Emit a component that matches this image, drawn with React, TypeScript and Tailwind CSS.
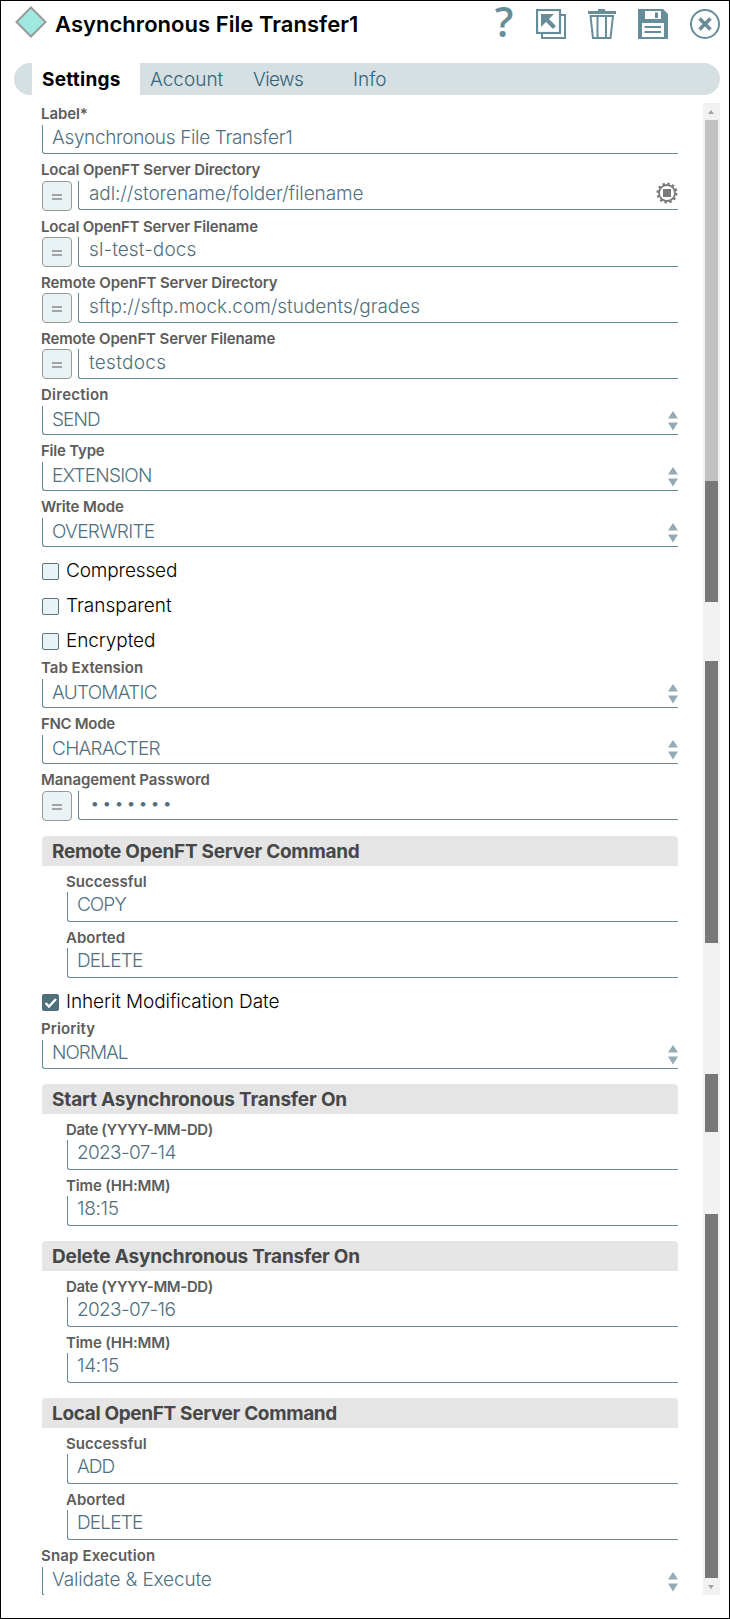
import React from 'react';

function Stepper() {
  return (
    <svg width="10" height="20" viewBox="0 0 10 20" className="absolute right-0 top-[5px] fill-[#93abb3]">
      <path d="M5 0 L10 7.5 H0 Z" />
      <path d="M0 11.5 H10 L5 19.5 Z" />
    </svg>
  );
}

function GearIcon() {
  return (
    <svg width="22" height="22" viewBox="0 0 22 22" className="absolute right-0 top-px">
      <circle cx="11" cy="11" r="8" fill="none" stroke="#7b7b7b" strokeWidth="1.8" />
      <circle cx="11" cy="11" r="9.4" fill="none" stroke="#7b7b7b" strokeWidth="2.2" strokeDasharray="2.46 2.46" />
      <rect x="7" y="7" width="8" height="8" fill="#7b7b7b" />
    </svg>
  );
}

type FieldProps = {
  label: string;
  value: string;
  kind?: 'text' | 'select' | 'expression';
  gear?: boolean;
  tall?: boolean;
  pad?: string;
  track?: string;
  labelTrack?: string;
};

function Field({ label, value, kind = 'text', gear, tall, pad, track = '', labelTrack = '' }: FieldProps) {
  const top = pad || (kind === 'select' ? 'pt-[2px]' : 'pt-px');
  const left = kind === 'expression' ? 'pl-[10px]' : 'pl-[9px]';

  return (
    <div className="h-14 shrink-0">
      <div className={`${tall ? 'h-[26px]' : 'h-[27px]'} pt-[6px] -ml-px text-[15px] leading-5 font-semibold text-[#5c5c5c] whitespace-nowrap`}>
        <span className={labelTrack}>{label}</span>
      </div>
      <div className="flex gap-[6px]">
        {kind === 'expression' && (
          <button className="w-[30px] h-[30px] shrink-0 rounded-[4px] border border-[#999] bg-[#e9f2f5] flex flex-col items-center justify-center gap-[2px] pt-px">
            <span className="w-[10px] h-[2px] bg-[#a3a3a3]" />
            <span className="w-[10px] h-[2px] bg-[#a3a3a3]" />
          </button>
        )}
        <div className={`relative flex-1 ${tall ? 'h-[30px]' : 'h-[29px]'} border-l border-b border-[#658b98] rounded-bl-[3px] ${left} ${top} text-[19px] leading-6 font-light text-[#4f6f7f] whitespace-nowrap`}>
          <span className={track}>{value}</span>
          {kind === 'select' && <Stepper />}
          {gear && <GearIcon />}
        </div>
      </div>
    </div>
  );
}

function Check({ label, checked, track = '' }: { label: string; checked?: boolean; track?: string }) {
  return (
    <div className="h-[35px] shrink-0 pt-4 flex items-start gap-[7px]">
      {checked ? (
        <svg width="17" height="17" viewBox="0 0 17 17" className="shrink-0">
          <rect width="17" height="17" rx="2" fill="#4f6f7b" />
          <path d="M3.5 9 L7 12.5 L14 5" fill="none" stroke="#fff" strokeWidth="2.4" />
        </svg>
      ) : (
        <span className="w-[17px] h-[17px] shrink-0 rounded-[2px] border border-[#58747f] bg-[#e9f2f5]" />
      )}
      <span className={`-mt-1 text-[19px] leading-6 font-light text-black whitespace-nowrap ${track}`}>{label}</span>
    </div>
  );
}

function Section({ title, track = '', children }: { title: string; track?: string; children: React.ReactNode }) {
  return (
    <section className="shrink-0 mt-[15px]">
      <h2 className="h-[30px] rounded-t-[4px] bg-[#e5e5e5] pl-[10px] pt-1 text-[19px] leading-6 font-bold text-[#474747] whitespace-nowrap">
        <span className={track}>{title}</span>
      </h2>
      <div className="pl-[25px]">{children}</div>
    </section>
  );
}

function Toolbar() {
  return (
    <div className="flex items-start text-[#678d99]">
      <span className="w-[24px] h-[40px] -ml-px mr-px text-center font-['Open_Sans'] font-semibold text-[41px] leading-[42px]">?</span>
      <svg width="30" height="30" viewBox="0 0 30 30" className="mt-[9px] ml-[19px]" fill="none" stroke="currentColor" strokeWidth="2">
        <path d="M25 6 H29 V29 H6 V25" />
        <rect x="1" y="1" width="23" height="23" strokeWidth="2.2" />
        <path d="M5 5 H18 L5 18 Z" fill="currentColor" stroke="none" />
        <path d="M9 9 L18.5 18.5" strokeWidth="4" />
      </svg>
      <svg width="28" height="30" viewBox="0 0 28 30" className="mt-[9px] ml-[22px]" fill="none" stroke="currentColor" strokeWidth="2">
        <path d="M0 3.5 H28" strokeWidth="3" />
        <path d="M10 1 H17" />
        <path d="M2.5 7 H25 L22.5 29 H5 Z" />
        <path d="M9.5 7 V29 M18 7 V29" />
      </svg>
      <svg width="30" height="30" viewBox="0 0 30 30" className="mt-[9px] ml-[22px]">
        <path d="M0 0 H25 L30 5 V30 H0 Z" fill="currentColor" />
        <path d="M7 2 H23 V10 H7 Z M4 14 H26 V28 H4 Z" fill="#fff" />
        <path d="M17 3.5 H20 V9 H17 Z M6.5 17 H23 V19 H6.5 Z M6.5 22 H23 V24 H6.5 Z" fill="currentColor" />
      </svg>
      <svg width="30" height="30" viewBox="0 0 30 30" className="mt-[9px] ml-[22px]" fill="none" stroke="currentColor">
        <circle cx="15" cy="15" r="14" strokeWidth="2" />
        <path d="M9.5 9.5 L20.5 20.5 M20.5 9.5 L9.5 20.5" strokeWidth="3.5" />
      </svg>
    </div>
  );
}

function Scrollbar() {
  return (
    <div className="w-[17px] h-full bg-[#f1f1f1] flex flex-col items-center pr-px">
      <div className="h-[17px] flex items-center">
        <svg width="6" height="4" viewBox="0 0 6 4"><path d="M3 0 L6 4 H0 Z" fill="#a3a3a3" /></svg>
      </div>
      <div className="w-[13px] h-[361px] bg-[#c1c1c1]" />
      <div className="w-[13px] h-[121px] bg-[#787878]" />
      <div className="w-[13px] h-[282px] mt-[59px] bg-[#787878]" />
      <div className="w-[13px] h-[58px] mt-[131px] bg-[#787878]" />
      <div className="w-[13px] h-[364px] mt-[82px] bg-[#787878]" />
      <div className="h-[17px] flex items-center">
        <svg width="6" height="4" viewBox="0 0 6 4"><path d="M0 0 H6 L3 4 Z" fill="#a3a3a3" /></svg>
      </div>
    </div>
  );
}

export default function App() {
  return (
    <div className="w-[730px] h-[1619px] bg-white border border-black font-['Inter',sans-serif] flex flex-col">
      <header className="h-[62px] flex justify-between pl-[14px] pr-[9px] -mt-px">
        <div className="flex items-start">
          <svg width="32" height="32" viewBox="0 0 32 32" className="mt-[6px]">
            <path d="M16 1.5 L30.5 16 L16 30.5 L1.5 16 Z" fill="#a0e9e1" stroke="#999" strokeWidth="2" />
          </svg>
          <h1 className="ml-2 mt-[10px] text-[22px] leading-7 font-semibold tracking-[0.04px] text-black whitespace-nowrap">Asynchronous File Transfer1</h1>
        </div>
        <Toolbar />
      </header>

      <nav className="mt-px ml-[13px] mr-[9px] h-8 rounded-full bg-[#d6dfe1] flex overflow-hidden text-[19px] leading-[34px] font-light text-[#336378] whitespace-nowrap">
        <div className="ml-[18px] w-[108px] pl-[10px] bg-white font-bold tracking-[0.25px] text-black">Settings</div>
        <div className="w-[103px] pl-[10px]">Account</div>
        <div className="w-[100px] pl-[10px] tracking-[-0.6px]">Views</div>
        <div className="pl-[10px]">Info</div>
      </nav>

      <div className="mt-2 h-[1492px] flex justify-between pl-[41px] pr-[9px]">
        <main className="w-[636px] h-full overflow-hidden flex flex-col -ml-px pl-px box-content">
          <div className="-mt-[5px] flex flex-col">
            <Field label="Label*" labelTrack="tracking-[-0.1px]" value="Asynchronous File Transfer1" track="tracking-[-0.35px]" />
            <Field label="Local OpenFT Server Directory" labelTrack="tracking-[-0.15px]" value="adl://storename/folder/filename" track="tracking-[-0.1px]" kind="expression" gear />
            <div className="h-px" />
            <Field label="Local OpenFT Server Filename" labelTrack="tracking-[-0.18px]" value="sl-test-docs" track="tracking-[0.1px]" kind="expression" tall />
            <Field label="Remote OpenFT Server Directory" labelTrack="tracking-[-0.1px]" value="sftp://sftp.mock.com/students/grades" pad="pt-[2px]" track="tracking-[-0.03px]" kind="expression" tall />
            <Field label="Remote OpenFT Server Filename" labelTrack="tracking-[-0.13px]" value="testdocs" pad="pt-[2px]" track="tracking-[0.3px]" kind="expression" tall />
            <Field label="Direction" labelTrack="tracking-[0.25px]" value="SEND" track="tracking-[-0.9px]" kind="select" />
            <Field label="File Type" labelTrack="tracking-[-0.2px]" value="EXTENSION" track="tracking-[-0.8px]" kind="select" />
            <Field label="Write Mode" labelTrack="tracking-[-0.1px]" value="OVERWRITE" track="tracking-[-0.7px]" kind="select" />
            <Check label="Compressed" track="tracking-[-0.15px]" />
            <Check label="Transparent" />
            <Check label="Encrypted" track="tracking-[-0.1px]" />
            <Field label="Tab Extension" value="AUTOMATIC" track="tracking-[-0.75px]" kind="select" />
            <Field label="FNC Mode" labelTrack="tracking-[-0.3px]" value="CHARACTER" track="tracking-[-0.7px]" kind="select" />
            <Field label="Management Password" labelTrack="tracking-[-0.07px]" value="•••••••" pad="pt-0" track="pl-px text-[17px] tracking-[2.5px]" kind="expression" />
            <div className="h-px" />
            <Section title="Remote OpenFT Server Command" track="tracking-[-0.26px]">
              <Field label="Successful" value="COPY" track="tracking-[-1px]" tall />
              <Field label="Aborted" value="DELETE" track="tracking-[-0.8px]" tall />
            </Section>
            <Check label="Inherit Modification Date" track="tracking-[-0.1px]" checked />
            <Field label="Priority" labelTrack="tracking-[0.1px]" value="NORMAL" pad="pt-px" track="tracking-[-1px]" kind="select" />
            <Section title="Start Asynchronous Transfer On" track="tracking-[-0.17px]">
              <Field label="Date (YYYY-MM-DD)" labelTrack="tracking-[-0.38px]" value="2023-07-14" track="tracking-[-0.65px]" tall />
              <Field label="Time (HH:MM)" labelTrack="tracking-[-0.15px]" value="18:15" track="tracking-[-0.3px]" tall />
            </Section>
            <Section title="Delete Asynchronous Transfer On" track="tracking-[-0.2px]">
              <Field label="Date (YYYY-MM-DD)" labelTrack="tracking-[-0.38px]" value="2023-07-16" track="tracking-[-0.65px]" tall />
              <Field label="Time (HH:MM)" labelTrack="tracking-[-0.15px]" value="14:15" track="tracking-[-0.3px]" tall />
            </Section>
            <Section title="Local OpenFT Server Command" track="tracking-[-0.34px]">
              <Field label="Successful" value="ADD" track="tracking-[-1px]" tall />
              <Field label="Aborted" value="DELETE" track="tracking-[-0.8px]" tall />
            </Section>
            <Field label="Snap Execution" labelTrack="tracking-[0.15px]" value="Validate & Execute" pad="pt-px" track="tracking-[-0.15px]" kind="select" />
          </div>
        </main>
        <Scrollbar />
      </div>
    </div>
  );
}
